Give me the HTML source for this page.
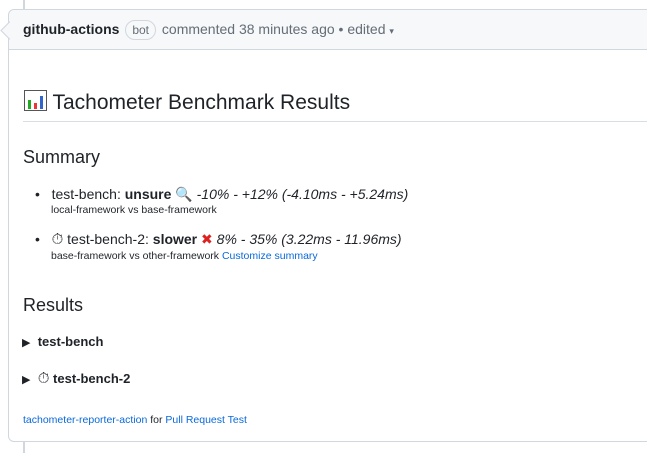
<!DOCTYPE html>
<html><head><meta charset="utf-8"><style>
body{margin:0;width:647px;height:453px;overflow:hidden;background:#fff;font-family:"Liberation Sans","DejaVu Sans",sans-serif;color:#1f2328;position:relative}
.vl{position:absolute;left:23px;width:2px;background:#d0d7de}
.box{position:absolute;left:8px;top:9px;width:660px;height:433px;border:1px solid #d0d7de;border-radius:6px;box-sizing:border-box}
.hd{height:39px;background:#f6f8fa;border-bottom:1px solid #d0d7de;border-radius:6px 0 0 0;font-size:14px;color:#656d76;line-height:39px;padding-left:14px;white-space:nowrap}
.arrow{position:absolute;left:-6px;top:14px;width:12px;height:12px;background:#f6f8fa;border-left:1px solid #d0d7de;border-bottom:1px solid #d0d7de;transform:rotate(45deg)}
.hd b{color:#1f2328}
.bot{display:inline-block;border:1px solid #d0d7de;border-radius:12px;font-size:12px;line-height:18px;padding:0 6px;color:#656d76;margin:0 2px}
.abs{position:absolute;white-space:nowrap}
a{color:#0969da;text-decoration:none}
.em{font-size:15px;line-height:14px}
</style></head><body>
<div class="vl" style="top:0;height:10px"></div>
<div class="vl" style="top:441px;height:12px"></div>
<div class="box"><div class="arrow"></div><div class="hd"><b>github-actions</b> <span class="bot">bot</span> commented 38 minutes ago • edited <span style="font-size:9px">▾</span></div></div>
<div class="abs" style="left:24px;top:90px;font-size:21px;line-height:26px"><svg width="23" height="21" style="vertical-align:-2px"><rect x="0.5" y="0.5" width="22" height="20" fill="#fff" stroke="#555"/><rect x="4" y="10" width="3" height="9" fill="#2a2"/><rect x="10" y="13" width="3" height="6" fill="#e33"/><rect x="16" y="6" width="3" height="13" fill="#36c"/></svg> Tachometer Benchmark Results</div>
<div class="abs" style="left:23px;top:121px;width:630px;height:1px;background:#d8dee4"></div>
<div class="abs" style="left:23px;top:147px;font-size:18px">Summary</div>
<div class="abs" style="left:35px;top:186px;font-size:14px">•&nbsp;&nbsp;&nbsp;test-bench: <b>unsure</b> 🔍 <i>-10% - +12% (-4.10ms - +5.24ms)</i></div>
<div class="abs" style="left:51px;top:204px;font-size:10.5px">local-framework vs base-framework</div>
<div class="abs" style="left:35px;top:231px;font-size:14px">•&nbsp;&nbsp;&nbsp;<span class="em">⏱</span> test-bench-2: <b>slower</b> <span style="color:#d22">✖</span> <i>8% - 35% (3.22ms - 11.96ms)</i></div>
<div class="abs" style="left:51px;top:250px;font-size:10.5px">base-framework vs other-framework <a>Customize summary</a></div>
<div class="abs" style="left:23px;top:295px;font-size:18px">Results</div>
<div class="abs" style="left:22px;top:334px;font-size:13px"><span style="font-size:11px">▶</span>&nbsp; <b>test-bench</b></div>
<div class="abs" style="left:22px;top:371px;font-size:13px"><span style="font-size:11px">▶</span>&nbsp; <span class="em">⏱</span> <b>test-bench-2</b></div>
<div class="abs" style="left:23px;top:414px;font-size:10.5px"><a>tachometer-reporter-action</a> for <a>Pull Request Test</a></div>
</body></html>
